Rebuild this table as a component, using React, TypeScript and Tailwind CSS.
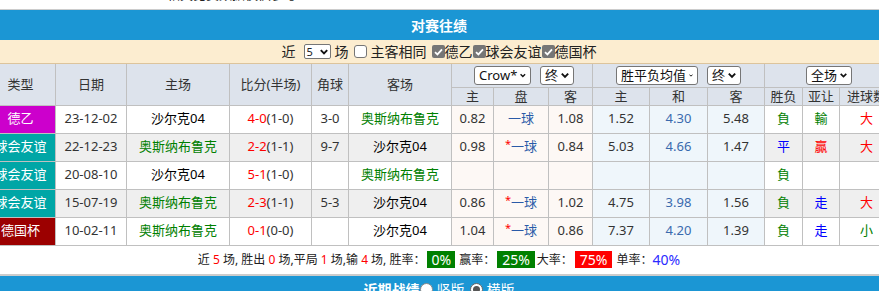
import React from "react";

const Chevron = () => (
  <svg width="10" height="7" viewBox="0 0 10 7" className="ml-[3px]">
    <path d="M1 1.2 L5 5.2 L9 1.2" fill="none" stroke="#111" strokeWidth="2.4" />
  </svg>
);

const Sel = ({ label, w }: { label: string; w: string }) => (
  <span
    className={`inline-flex items-center justify-between h-[19px] px-[4px] bg-white border border-[#767676] rounded-[3px] text-[13px] leading-none text-[#111] align-middle ${w}`}
  >
    <span>{label}</span>
    <Chevron />
  </span>
);

const Checked = () => (
  <span className="inline-flex items-center justify-center w-[13px] h-[13px] rounded-[2px] bg-[#767676] align-middle">
    <svg width="9" height="8" viewBox="0 0 9 8">
      <path d="M1 4.2 L3.4 6.4 L8 1.4" fill="none" stroke="#fff" strokeWidth="1.8" />
    </svg>
  </span>
);

type Row = {
  type: string;
  typeBg: string;
  date: string;
  home: string;
  homeGreen: boolean;
  score: string;
  half: string;
  corner: string;
  away: string;
  awayGreen: boolean;
  o: string[];
  star: boolean;
  wl: [string, string];
  ah: [string, string];
  ou: [string, string];
  gray: boolean;
};

const rows: Row[] = [
  { type: "德乙", typeBg: "bg-[#cc00cc]", date: "23-12-02", home: "沙尔克04", homeGreen: false, score: "4-0", half: "(1-0)", corner: "3-0", away: "奥斯纳布鲁克", awayGreen: true, o: ["0.82", "一球", "1.08", "1.52", "4.30", "5.48"], star: false, wl: ["負", "text-[#008000]"], ah: ["輸", "text-[#008000]"], ou: ["大", "text-[#ff0000]"], gray: false },
  { type: "球会友谊", typeBg: "bg-[#00a6a6]", date: "22-12-23", home: "奥斯纳布鲁克", homeGreen: true, score: "2-2", half: "(1-1)", corner: "9-7", away: "沙尔克04", awayGreen: false, o: ["0.98", "一球", "0.84", "5.03", "4.66", "1.47"], star: true, wl: ["平", "text-[#0000ff]"], ah: ["贏", "text-[#ff0000]"], ou: ["大", "text-[#ff0000]"], gray: true },
  { type: "球会友谊", typeBg: "bg-[#00a6a6]", date: "20-08-10", home: "沙尔克04", homeGreen: false, score: "5-1", half: "(1-0)", corner: "", away: "奥斯纳布鲁克", awayGreen: true, o: ["", "", "", "", "", ""], star: false, wl: ["負", "text-[#008000]"], ah: ["", ""], ou: ["", ""], gray: false },
  { type: "球会友谊", typeBg: "bg-[#00a6a6]", date: "15-07-19", home: "奥斯纳布鲁克", homeGreen: true, score: "2-3", half: "(1-1)", corner: "5-3", away: "沙尔克04", awayGreen: false, o: ["0.86", "一球", "1.02", "4.75", "3.98", "1.56"], star: true, wl: ["負", "text-[#008000]"], ah: ["走", "text-[#0000ff]"], ou: ["大", "text-[#ff0000]"], gray: true },
  { type: "德国杯", typeBg: "bg-[#9c0000]", date: "10-02-11", home: "奥斯纳布鲁克", homeGreen: true, score: "0-1", half: "(0-0)", corner: "", away: "沙尔克04", awayGreen: false, o: ["1.04", "一球", "0.86", "7.37", "4.20", "1.39"], star: true, wl: ["負", "text-[#008000]"], ah: ["走", "text-[#0000ff]"], ou: ["小", "text-[#008000]"], gray: false },
];

const td = "border border-[#c0c0c0] text-center p-0 whitespace-nowrap";

export default function App() {
  return (
    <div className="w-[879px] h-[291px] overflow-hidden bg-white font-['Noto_Sans','Noto_Sans_CJK_SC',sans-serif] text-[#333]">
      <div className="w-[908px] -ml-[15px]">
        <div className="h-[9px] overflow-hidden border-b border-[#cccccc] box-content">
          <div className="ml-[182px] -mt-[12px] text-[13px] leading-[13px] text-[#222]">相关比赛数据仅供参考</div>
        </div>
        <div className="h-[30px] bg-[#1b96d4] flex items-center justify-center text-white font-bold text-[14px]">
          对赛往绩
        </div>
        <div className="h-[23px] bg-[#fcedd0] border-b border-[#dcc49c] box-content flex items-center justify-center text-[14px] text-[#222]">
          <span>近</span>
          <span className="ml-[8px] inline-flex items-center justify-between w-[27px] h-[15px] px-[2px] bg-white border border-[#767676] rounded-[2px] text-[11px] leading-none">
            <span>5</span>
            <svg width="8" height="6" viewBox="0 0 10 7"><path d="M1 1.2 L5 5.2 L9 1.2" fill="none" stroke="#111" strokeWidth="2.4" /></svg>
          </span>
          <span className="ml-[4px]">场</span>
          <span className="ml-[5px] inline-block w-[13px] h-[13px] rounded-[3px] border border-[#767676] bg-white" />
          <span className="ml-[4px]">主客相同</span>
          <span className="ml-[5px] inline-flex"><Checked /></span>
          <span>德乙</span>
          <Checked />
          <span>球会友谊</span>
          <Checked />
          <span>德国杯</span>
        </div>
        <table className="table-fixed border-collapse w-[908px] text-[12px]">
          <colgroup>
            <col className="w-[70px]" />
            <col className="w-[71px]" />
            <col className="w-[103px]" />
            <col className="w-[82px]" />
            <col className="w-[37px]" />
            <col className="w-[103px]" />
            <col className="w-[42px]" />
            <col className="w-[55px]" />
            <col className="w-[44px]" />
            <col className="w-[57px]" />
            <col className="w-[58px]" />
            <col className="w-[57px]" />
            <col className="w-[38px]" />
            <col className="w-[37px]" />
            <col className="w-[54px]" />
          </colgroup>
          <thead className="bg-[#dde3ec] text-[13px] text-[#333]">
            <tr className="h-[23px]">
              <th rowSpan={2} className={`${td} font-normal border-t-0`}>类型</th>
              <th rowSpan={2} className={`${td} font-normal border-t-0`}>日期</th>
              <th rowSpan={2} className={`${td} font-normal border-t-0`}>主场</th>
              <th rowSpan={2} className={`${td} font-normal border-t-0`}>比分(半场)</th>
              <th rowSpan={2} className={`${td} font-normal border-t-0`}>角球</th>
              <th rowSpan={2} className={`${td} font-normal border-t-0`}>客场</th>
              <th colSpan={3} className={`${td} font-normal border-t-0`}>
                <span className="inline-flex items-center gap-[9px] pt-[1px] ml-[4px]">
                  <Sel label="Crow*" w="w-[57px]" />
                  <Sel label="终" w="w-[34px]" />
                </span>
              </th>
              <th colSpan={3} className={`${td} font-normal border-t-0`}>
                <span className="inline-flex items-center gap-[9px] pt-[1px]">
                  <Sel label="胜平负均值" w="w-[82px]" />
                  <Sel label="终" w="w-[34px]" />
                </span>
              </th>
              <th colSpan={3} className={`${td} font-normal border-t-0`}>
                <span className="inline-flex items-center pt-[1px]">
                  <Sel label="全场" w="w-[46px]" />
                </span>
              </th>
            </tr>
            <tr className="h-[18px]">
              {["主", "盘", "客", "主", "和", "客", "胜负", "亚让", "进球数"].map((t, i) => (
                <th key={i} className={`${td} font-normal leading-[16px]`}>{t}</th>
              ))}
            </tr>
          </thead>
          <tbody>
            {rows.map((r, i) => {
              const base = r.gray ? "bg-[#efefef]" : "bg-white";
              return (
                <tr key={i} className="h-[28px]">
                  <td className={`${td} ${r.typeBg} text-white text-[13px]`}>{r.type}</td>
                  <td className={`${td} ${base} text-[13px] text-[#333]`}>{r.date}</td>
                  <td className={`${td} ${base} text-[13px] ${r.homeGreen ? "text-[#008000]" : "text-black"}`}>{r.home}</td>
                  <td className={`${td} ${base} text-[13px]`}>
                    <span className="text-[#ff0000]">{r.score}</span>
                    <span className="text-[#333]">{r.half}</span>
                  </td>
                  <td className={`${td} ${base} text-[13px] text-[#333]`}>{r.corner}</td>
                  <td className={`${td} ${base} text-[13px] ${r.awayGreen ? "text-[#008000]" : "text-black"}`}>{r.away}</td>
                  <td className={`${td} bg-[#fdf8f5] text-[13px] text-[#333]`}>{r.o[0]}</td>
                  <td className={`${td} bg-[#fdf8f5] text-[13px] text-[#2a5aa8]`}>
                    {r.star && <span className="text-[#ff0000] relative -top-[3px] text-[11px]">*</span>}
                    {r.o[1]}
                  </td>
                  <td className={`${td} bg-[#fdf8f5] text-[13px] text-[#333]`}>{r.o[2]}</td>
                  <td className={`${td} bg-[#eff6fb] text-[13px] text-[#333]`}>{r.o[3]}</td>
                  <td className={`${td} bg-[#eff6fb] text-[13px] text-[#3a6aae]`}>{r.o[4]}</td>
                  <td className={`${td} bg-[#eff6fb] text-[13px] text-[#333]`}>{r.o[5]}</td>
                  <td className={`${td} ${base} text-[13px] ${r.wl[1]}`}>{r.wl[0]}</td>
                  <td className={`${td} ${base} text-[13px] ${r.ah[1]}`}>{r.ah[0]}</td>
                  <td className={`${td} ${base} text-[13px] ${r.ou[1]}`}>{r.ou[0]}</td>
                </tr>
              );
            })}
          </tbody>
        </table>
        <div className="h-[28px] flex items-center justify-center text-[12px] text-[#222]">
          <span>近 <span className="text-[#ff0000]">5</span> 场, 胜出 <span className="text-[#ff0000]">0</span> 场,平局 <span className="text-[#ff0000]">1</span> 场,输 <span className="text-[#ff0000]">4</span> 场, 胜率：</span>
          <span className="ml-[2px] px-[4px] h-[17px] leading-[17px] bg-[#008000] text-white text-[14px]">0%</span>
          <span className="ml-[4px]">赢率：</span>
          <span className="ml-[2px] px-[5px] h-[17px] leading-[17px] bg-[#008000] text-white text-[14px]">25%</span>
          <span className="ml-[2px]">大率：</span>
          <span className="ml-[2px] px-[5px] h-[17px] leading-[17px] bg-[#ff0000] text-white text-[14px]">75%</span>
          <span className="ml-[4px]">单率：</span>
          <span className="text-[#2b2bff] text-[14px]">40%</span>
        </div>
        <div className="border-t-2 border-[#cccccc] h-[30px] bg-[#1b96d4] flex items-center justify-center text-white text-[14px]">
          <span className="font-bold">近期战绩</span>
          <span className="inline-block w-[13px] h-[13px] rounded-full bg-white border border-[#888]" />
          <span className="ml-[4px]">竖版</span>
          <span className="ml-[5px] inline-flex items-center justify-center w-[13px] h-[13px] rounded-full bg-white border border-[#666]">
            <span className="w-[7px] h-[7px] rounded-full bg-[#555]" />
          </span>
          <span className="ml-[4px]">横版</span>
        </div>
      </div>
    </div>
  );
}
